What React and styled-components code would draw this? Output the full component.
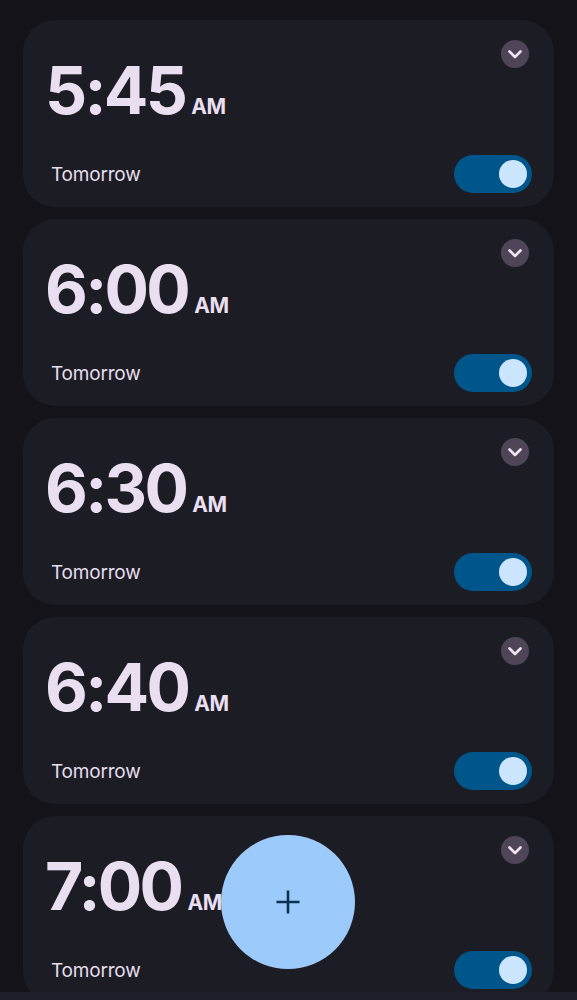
import React from "react";
import styled, { createGlobalStyle } from "styled-components";

const Global = createGlobalStyle`
  html, body { margin: 0; padding: 0; background: #14131a; }
  #root { height: 1000px; }
  * { box-sizing: border-box; }
`;

const Screen = styled.div`
  position: relative;
  height: 1000px;
  display: flex;
  flex-direction: column;
  background: #14131a;
  font-family: Inter, "Noto Sans", sans-serif;
  overflow: hidden;
`;

const List = styled.div`
  flex: 1;
  min-height: 0;
  overflow: hidden;
  display: flex;
  flex-direction: column;
  gap: 12px;
  padding: 20px 23px 0;
`;

const Card = styled.div`
  flex: none;
  height: 187px;
  border-radius: 32px;
  background: #1c1c25;
  display: flex;
  flex-direction: column;
  justify-content: space-between;
  padding: 20px 22px 14px 22px;
`;

const TopRow = styled.div`
  display: flex;
  justify-content: space-between;
  align-items: flex-start;
`;

const Time = styled.div`
  display: flex;
  align-items: baseline;
  margin-top: 26px;
  color: #e9dff0;
`;

const Digits = styled.span`
  font-size: 66px;
  font-weight: 650;
  line-height: 48px;
  letter-spacing: -2.7px;
`;

const Meridiem = styled.span`
  font-size: 21px;
  font-weight: 650;
  margin-left: 6px;
  letter-spacing: -0.4px;
`;

const Expand = styled.div`
  width: 28px;
  height: 28px;
  border-radius: 50%;
  background: #4e4558;
  display: flex;
  align-items: center;
  justify-content: center;
  margin-right: 3px;
`;

const BottomRow = styled.div`
  display: flex;
  justify-content: space-between;
  align-items: center;
`;

const Label = styled.span`
  font-size: 19px;
  color: #e6dfec;
  margin-left: 6px;
  letter-spacing: -0.2px;
`;

const Switch = styled.div`
  width: 78px;
  height: 38px;
  border-radius: 19px;
  background: #00568a;
  display: flex;
  align-items: center;
  justify-content: ${(p) => (p.$on ? "flex-end" : "flex-start")};
  padding: 0 5px;
`;

const Knob = styled.div`
  width: 28px;
  height: 28px;
  border-radius: 50%;
  background: #cce5ff;
`;

const NavBar = styled.div`
  flex: none;
  height: 8px;
  background: #1e1f28;
`;

const Fab = styled.button`
  position: absolute;
  left: 221px;
  top: 835px;
  width: 134px;
  height: 134px;
  border-radius: 50%;
  border: none;
  background: #9ccafa;
  display: flex;
  align-items: center;
  justify-content: center;
  padding: 0;
`;

const alarms = ["5:45", "6:00", "6:30", "6:40", "7:00"];

function Chevron() {
  return (
    <svg width="18" height="18" viewBox="0 0 18 18">
      <path d="M3.5 6.5 L9 12 L14.5 6.5" fill="none" stroke="#f3e3f4" strokeWidth="2.6" strokeLinecap="round" strokeLinejoin="round" />
    </svg>
  );
}

export default function App() {
  return (
    <>
      <Global />
      <Screen>
        <List>
          {alarms.map((t) => (
            <Card key={t}>
              <TopRow>
                <Time>
                  <Digits>{t}</Digits>
                  <Meridiem>AM</Meridiem>
                </Time>
                <Expand>
                  <Chevron />
                </Expand>
              </TopRow>
              <BottomRow>
                <Label>Tomorrow</Label>
                <Switch $on>
                  <Knob />
                </Switch>
              </BottomRow>
            </Card>
          ))}
        </List>
        <NavBar />
        <Fab aria-label="Add alarm">
          <svg width="26" height="26" viewBox="0 0 26 26">
            <path d="M13 1.5 V24.5 M1.5 13 H24.5" stroke="#0d3354" strokeWidth="2.6" />
          </svg>
        </Fab>
      </Screen>
    </>
  );
}
